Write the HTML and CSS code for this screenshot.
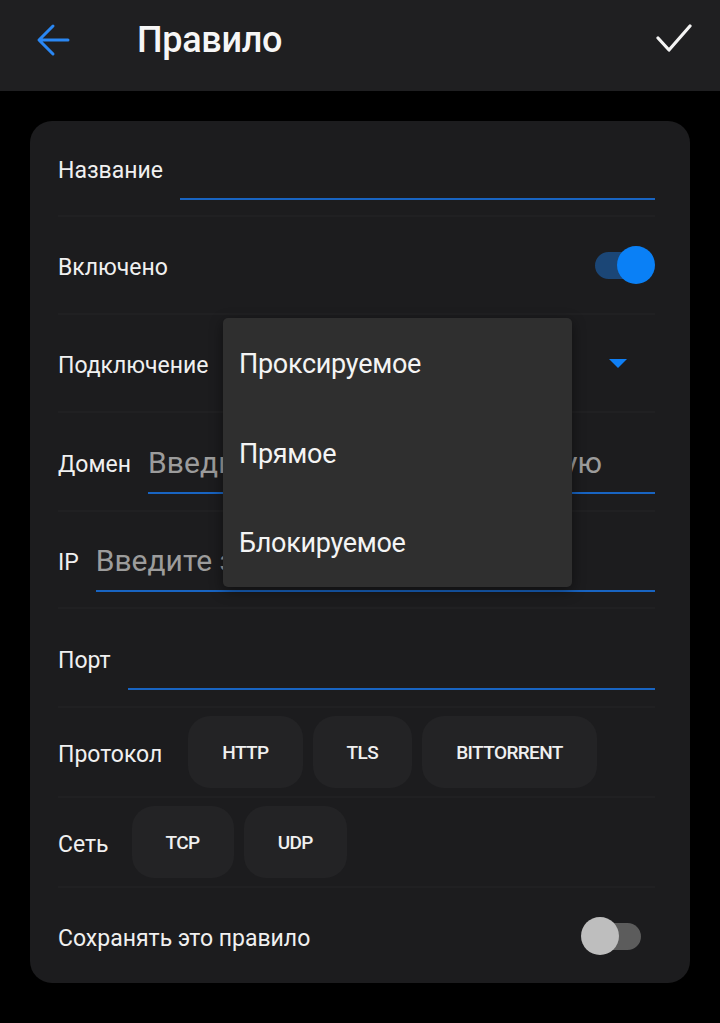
FILE: index.html
```html
<!DOCTYPE html>
<html lang="ru">
<head>
<meta charset="utf-8">
<title>Правило</title>
<link rel="stylesheet" href="styles.css">
</head>
<body>
<header class="appbar">
  <button class="icon-btn back" aria-label="Назад">
    <svg width="34" height="34" viewBox="0 0 34 34"><path d="M32 17H4M17 3L3 17l14 14" fill="none" stroke="#2a87f3" stroke-width="3" stroke-linecap="round" stroke-linejoin="round"/></svg>
  </button>
  <h1 class="title">Правило</h1>
  <button class="icon-btn done" aria-label="Готово">
    <svg width="36" height="30" viewBox="0 0 36 30"><path d="M2 14l11 12L34 2" fill="none" stroke="#f4f4f4" stroke-width="3.2" stroke-linecap="round" stroke-linejoin="round"/></svg>
  </button>
</header>

<main class="content">
  <section class="card">
    <div class="row r-name">
      <span class="label">Название</span>
      <div class="field"></div>
    </div>

    <div class="row r-enabled">
      <span class="label">Включено</span>
      <span class="switch on"><span class="track"></span><span class="thumb"></span></span>
    </div>

    <div class="row r-conn">
      <span class="label">Подключение</span>
      <span class="spacer"></span>
      <span class="caret"></span>
      <ul class="menu">
        <li>Проксируемое</li>
        <li>Прямое</li>
        <li>Блокируемое</li>
      </ul>
    </div>

    <div class="row r-domain">
      <span class="label">Домен</span>
      <div class="field"><span class="placeholder wide">Введите домены через запятую</span></div>
    </div>

    <div class="row r-ip">
      <span class="label">IP</span>
      <div class="field"><span class="placeholder">Введите значение</span></div>
    </div>

    <div class="row r-port">
      <span class="label">Порт</span>
      <div class="field"></div>
    </div>

    <div class="row r-chips">
      <span class="label chip-label">Протокол</span>
      <div class="chips">
        <span class="chip">HTTP</span>
        <span class="chip">TLS</span>
        <span class="chip">BITTORRENT</span>
      </div>
    </div>

    <div class="row r-chips">
      <span class="label chip-label short">Сеть</span>
      <div class="chips">
        <span class="chip">TCP</span>
        <span class="chip">UDP</span>
      </div>
    </div>

    <div class="row r-keep">
      <span class="label">Сохранять это правило</span>
      <span class="switch off"><span class="track"></span><span class="thumb"></span></span>
    </div>
  </section>
</main>
</body>
</html>
```

FILE: styles.css
```css
* { box-sizing: border-box; }

html, body {
  margin: 0;
  padding: 0;
  background: #000;
  color: #f2f2f2;
  font-family: Roboto, "Noto Sans", sans-serif;
}

/* top app bar */
.appbar {
  height: 91px;
  background: #1f1f21;
  display: flex;
  align-items: center;
  padding: 0 28px 12px 36px;
}

.icon-btn {
  background: none;
  border: 0;
  padding: 0;
  display: flex;
  align-items: center;
  cursor: pointer;
}

.title {
  margin: 0 0 0 67px;
  font-size: 36px;
  font-weight: 500;
  color: #f6f6f6;
  letter-spacing: -0.3px;
  flex: 1;
}

.done { margin-top: -2px; }

/* card with the rule form */
.content { padding: 30px 30px 0; }

.card {
  background: #1c1c1e;
  border-radius: 22px;
  padding: 0 35px 0 28px;
}

.row {
  position: relative;
  display: flex;
  align-items: center;
  border-bottom: 2px solid #202022;
}

.row:last-child { border-bottom: 0; }

.r-name   { height: 96px; }
.r-enabled{ height: 98px; }
.r-conn   { height: 98px; }
.r-domain { height: 99px; }
.r-ip     { height: 97px; }
.r-port   { height: 99px; }
.r-chips  { height: 90px; }
.r-keep   { height: 95px; }

.label {
  font-size: 23px;
  color: #f0f0f0;
  white-space: nowrap;
  padding-top: 5px;
}

/* text inputs with blue underline */
.field {
  flex: 1;
  height: 58px;
  margin-left: 17px;
  margin-top: 6px;
  padding-bottom: 4px;
  border-bottom: 2px solid #1864c2;
  display: flex;
  align-items: center;
  overflow: hidden;
  white-space: nowrap;
}

.placeholder {
  font-size: 30px;
  color: #9c9c9c;
  padding-top: 2px;
}

.placeholder.wide { letter-spacing: 0.1px; }

/* toggle switches */
.switch {
  margin-left: auto;
  position: relative;
  width: 60px;
  height: 38px;
  flex: none;
}

.switch .track {
  position: absolute;
  top: 6px;
  height: 27px;
  border-radius: 14px;
}

.switch .thumb {
  position: absolute;
  top: 0;
  width: 38px;
  height: 38px;
  border-radius: 50%;
}

.switch.on .track { left: 0; width: 54px; background: #1b4676; }
.switch.on .thumb { right: 0; background: #0a80f6; }

.switch.off { margin-right: 14px; }
.switch.off .track { right: 0; width: 52px; background: #5c5c5c; }
.switch.off .thumb { left: 0; background: #bebebe; }

/* connection selector */
.spacer { flex: 1; }

.caret {
  width: 0;
  height: 0;
  border-left: 9.5px solid transparent;
  border-right: 9.5px solid transparent;
  border-top: 9px solid #0f7ff5;
  margin-right: 28px;
  margin-top: 1px;
}

.menu {
  position: absolute;
  left: 165px;
  top: 3px;
  width: 349px;
  height: 269px;
  margin: 0;
  padding: 0;
  list-style: none;
  background: #2f2f2f;
  border-radius: 5px;
  box-shadow: 0 4px 14px rgba(0, 0, 0, 0.45);
  z-index: 2;
  display: flex;
  flex-direction: column;
  justify-content: space-around;
}

.menu li {
  font-size: 27px;
  letter-spacing: -0.3px;
  color: #f4f4f4;
  padding: 2px 16px 0;
  height: 90px;
  display: flex;
  align-items: center;
}

/* chip groups */
.chip-label { margin-right: 26px; }
.chip-label.short { margin-right: 23px; }

.chips {
  display: flex;
  gap: 10px;
}

.chip {
  height: 72px;
  padding: 0 34px;
  border-radius: 22px;
  background: #232325;
  display: flex;
  align-items: center;
  font-size: 19px;
  font-weight: 500;
  letter-spacing: -0.6px;
  color: #f0f0f0;
}
```
